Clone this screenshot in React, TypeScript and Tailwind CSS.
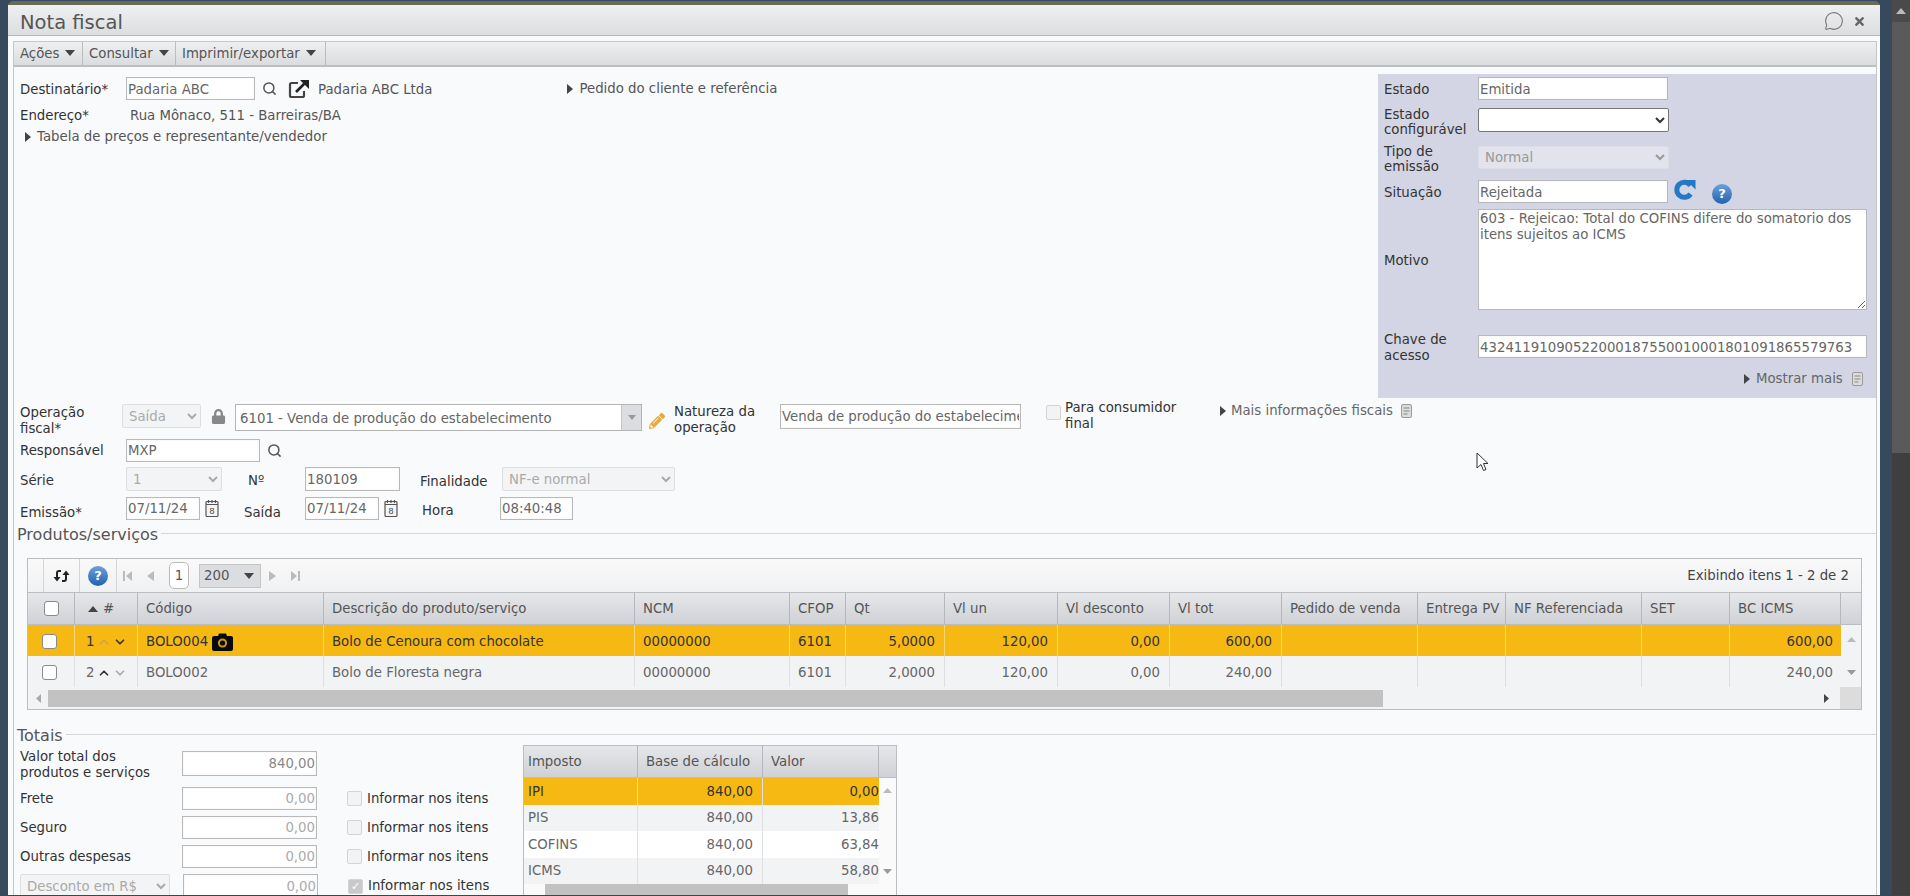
import { ChevronDown, ChevronUp, MessageCircle, Search } from "lucide-react";
import { FaLock, FaPencilAlt, FaTimes } from "react-icons/fa";

const inputBase =
  "h-full w-full border border-[#b9b9b9] bg-white px-[1px] text-[13.3px] text-[#666] shadow-[inset_0_0_1px_#ccc] outline-none";
const gridCols =
  "grid grid-cols-[47px_63px_186px_311px_155px_56px_99px_113px_112px_112px_136px_88px_136px_88px_111px]";
const taxCols = "grid grid-cols-[114px_125px_116px]";

const Caret = ({ className = "" }: { className?: string }) => (
  <svg width="6" height="10" viewBox="0 0 6 10" className={`shrink-0 ${className}`}>
    <polygon points="0,0 6,5 0,10" fill="#444" />
  </svg>
);

const MenuArrow = () => (
  <svg width="10" height="6" viewBox="0 0 10 6" className="ml-[6px] mb-[3px]">
    <polygon points="0,0 10,0 5,6" fill="#444" />
  </svg>
);

const DocIcon = ({ className = "" }: { className?: string }) => (
  <svg width="11" height="14" viewBox="0 0 11 14" className={`shrink-0 ${className}`}>
    <rect x="0.5" y="0.5" width="10" height="13" rx="1.5" fill="#dcdcdc" stroke="#999" />
    <path d="M2.5 4h6M2.5 7h6M2.5 10h4" stroke="#888" strokeWidth="1" />
  </svg>
);

const CalendarIcon = ({ className = "" }: { className?: string }) => (
  <svg width="17" height="19" viewBox="0 0 17 19" className={`shrink-0 ${className}`}>
    <rect x="2" y="2.5" width="12" height="15" rx="1" fill="#f5f5f5" stroke="#555" strokeWidth="1.2" />
    <path d="M2 5.5h12M4.5 1v3M8 1v3M11.5 1v3" stroke="#555" strokeWidth="1.2" />
    <text x="8" y="15" fontSize="9" textAnchor="middle" fill="#444" fontFamily="Liberation Sans">
      8
    </text>
  </svg>
);

const RefreshIcon = ({ className = "" }: { className?: string }) => (
  <svg width="22" height="21" viewBox="0 0 22 21" className={`shrink-0 ${className}`}>
    <path d="M16.5 6.5A7.5 7.5 0 1 0 16.5 15" fill="none" stroke="#2279c5" strokeWidth="5" />
    <polygon points="12,1 21.5,1 21.5,10.5" fill="#2279c5" />
  </svg>
);

const SyncIcon = () => (
  <svg width="17" height="16" viewBox="0 0 17 16">
    <path d="M8 3H6a2 2 0 0 0-2 2v5" fill="none" stroke="#222" strokeWidth="2" />
    <polygon points="0.5,9 7.5,9 4,13.5" fill="#222" />
    <path d="M9 13h2a2 2 0 0 0 2-2V6" fill="none" stroke="#222" strokeWidth="2" />
    <polygon points="9.5,7 16.5,7 13,2.5" fill="#222" />
  </svg>
);

const CameraIcon = () => (
  <svg width="21" height="18" viewBox="0 0 21 18" className="ml-[4px] shrink-0">
    <path d="M2 3h4l1-2.5h7L15 3h4a2 2 0 0 1 2 2v11a2 2 0 0 1-2 2H2a2 2 0 0 1-2-2V5a2 2 0 0 1 2-2z" fill="#0a0a0a" />
    <circle cx="10.5" cy="10" r="4.6" fill="#c99a12" />
    <circle cx="10.5" cy="10" r="2.6" fill="#0a0a0a" />
  </svg>
);

const HelpDot = ({ className = "" }: { className?: string }) => (
  <div
    className={`flex shrink-0 items-center justify-center rounded-full bg-gradient-to-b from-[#6d9fdc] to-[#1f63ae] font-bold text-white ${className}`}
  >
    ?
  </div>
);

const Check = ({ className = "" }: { className?: string }) => (
  <div className={`shrink-0 rounded-[3px] border border-[#8a8a8a] bg-white ${className}`} />
);

const MutedCheck = ({ checked = false }: { checked?: boolean }) => (
  <div className="ml-[30px] flex h-[15px] w-[15px] shrink-0 items-center justify-center rounded-[2px] border border-[#d4d4d4] bg-[#f3f3f3] text-[11px] leading-none text-white">
    {checked && <span className="flex h-full w-full items-center justify-center bg-[#c9c9c9]">✓</span>}
  </div>
);

const Legend = ({ title, className = "" }: { title: string; className?: string }) => (
  <div className={`flex items-center pl-[3px] ${className}`}>
    <span className="text-[16px] leading-[18px] text-[#555]">{title}</span>
    <div className="ml-[3px] mb-[3px] h-px flex-1 bg-[#d6d6d6]" />
  </div>
);

const ToolbarMenu = ({ label, className }: { label: string; className: string }) => (
  <div className={`flex h-full items-center border-r border-[#bdbdbd] pl-[6px] pt-[1px] text-[#555] ${className}`}>
    {label}
    <MenuArrow />
  </div>
);

const headers = [
  "Código",
  "Descrição do produto/serviço",
  "NCM",
  "CFOP",
  "Qt",
  "Vl un",
  "Vl desconto",
  "Vl tot",
  "Pedido de venda",
  "Entrega PV",
  "NF Referenciada",
  "SET",
  "BC ICMS",
];

type ItemRow = {
  n: string;
  code: string;
  desc: string;
  qt: string;
  total: string;
  active: boolean;
};

const items: ItemRow[] = [
  { n: "1", code: "BOLO004", desc: "Bolo de Cenoura com chocolate", qt: "5,0000", total: "600,00", active: true },
  { n: "2", code: "BOLO002", desc: "Bolo de Floresta negra", qt: "2,0000", total: "240,00", active: false },
];

const GridRow = ({ row }: { row: ItemRow }) => {
  const cell = row.active ? "border-r border-[#fbd774] pt-[2px]" : "border-r border-[#dedfe2] pt-[2px]";
  return (
    <div
      className={`${gridCols} h-[31px] items-stretch ${row.active ? "bg-[#f6b913] text-[#333]" : "bg-[#f2f3f5] text-[#666]"}`}
    >
      <div className={`flex items-center pl-[14px] ${cell}`}>
        <Check className="h-[15px] w-[15px]" />
      </div>
      <div className={`flex items-center pl-[11px] ${cell}`}>
        <span>{row.n}</span>
        <ChevronUp size={14} strokeWidth={3} className={`ml-[3px] ${row.active ? "text-[#c9a550]" : "text-[#333]"}`} />
        <ChevronDown size={14} strokeWidth={3} className={`ml-[2px] ${row.active ? "text-[#333]" : "text-[#aaa]"}`} />
      </div>
      <div className={`flex items-center pl-[8px] ${cell}`}>
        {row.code}
        {row.active && <CameraIcon />}
      </div>
      <div className={`flex items-center pl-[8px] ${cell}`}>{row.desc}</div>
      <div className={`flex items-center pl-[8px] ${cell}`}>00000000</div>
      <div className={`flex items-center pl-[8px] ${cell}`}>6101</div>
      <div className={`flex items-center justify-end pr-[9px] ${cell}`}>{row.qt}</div>
      <div className={`flex items-center justify-end pr-[9px] ${cell}`}>120,00</div>
      <div className={`flex items-center justify-end pr-[9px] ${cell}`}>0,00</div>
      <div className={`flex items-center justify-end pr-[9px] ${cell}`}>{row.total}</div>
      <div className={cell} />
      <div className={cell} />
      <div className={cell} />
      <div className={cell} />
      <div className="flex items-center justify-end pr-[8px] pt-[2px]">{row.total}</div>
    </div>
  );
};

const taxes = [
  { name: "IPI", value: "0,00", rowClass: "bg-[#f6b913] text-[#333]" },
  { name: "PIS", value: "13,86", rowClass: "bg-[#f2f3f5] text-[#666]" },
  { name: "COFINS", value: "63,84", rowClass: "bg-white text-[#666]" },
  { name: "ICMS", value: "58,80", rowClass: "bg-[#f2f3f5] text-[#666]" },
];

const TotalRow = ({ label, value, checked }: { label: string; value: string; checked?: boolean }) => (
  <div className="mt-[6px] flex h-[23px] items-center">
    <div className="w-[162px] text-[#333]">{label}</div>
    <div className="h-full w-[135px]">
      <input readOnly value={value} className={`${inputBase} text-right text-[#aaa]`} />
    </div>
    <MutedCheck checked={checked} />
    <span className="ml-[5px] text-[#333]">Informar nos itens</span>
  </div>
);

export default function App() {
  return (
    <div className="relative flex h-[896px] w-[1910px] overflow-hidden border-b border-[#444] bg-[#37495c] font-['DejaVu_Sans',sans-serif] text-[13.3px]">
      {/* modal */}
      <div className="ml-[8px] mt-[5px] flex w-[1872px] flex-col rounded-t-[5px] bg-[#f9fafc] shadow-[0_-4px_0_#6b6a58]">
        <div className="flex h-[31px] shrink-0 items-center border-b border-[#b4b6b8] bg-gradient-to-b from-[#eef0f1] to-[#dcdedf] pl-[12px] pr-[14px]">
          <span className="pt-[6px] text-[19.5px] text-[#555]">Nota fiscal</span>
          <MessageCircle size={20} strokeWidth={1.3} className="ml-auto mt-[2px] text-[#777]" />
          <FaTimes size={13} className="ml-[9px] mt-[2px] text-[#666]" />
        </div>

        <div className="ml-[5px] mt-[5px] flex w-[1864px] flex-1 flex-col border-x border-t border-[#c6c7c9]">
          <div className="flex h-[25px] shrink-0 items-center border-b-2 border-[#bdbec0] bg-gradient-to-b from-[#eeeff0] to-[#dbdcdf]">
            <ToolbarMenu label="Ações" className="w-[69px]" />
            <ToolbarMenu label="Consultar" className="w-[93px]" />
            <ToolbarMenu label="Imprimir/exportar" className="w-[150px]" />
          </div>

          {/* upper area */}
          <div className="flex h-[331px] shrink-0">
            <div className="w-[1364px] pl-[6px] pt-[10px]">
              <div className="flex h-[23px] items-center">
                <div className="w-[106px] pt-[2px] text-[#333]">Destinatário*</div>
                <div className="h-full w-[129px]">
                  <input readOnly value="Padaria ABC" className={`${inputBase} pt-[2px]`} />
                </div>
                <Search size={15} strokeWidth={2.4} className="ml-[7px] text-[#555]" />
                <svg width="22" height="20" viewBox="0 0 22 20" className="ml-[11px]">
                  <path d="M10 4H3.5A1.5 1.5 0 0 0 2 5.5v11A1.5 1.5 0 0 0 3.5 18h11a1.5 1.5 0 0 0 1.5-1.5V12" fill="none" stroke="#444" strokeWidth="2.2" />
                  <path d="M8 13 18 3" stroke="#222" strokeWidth="2.6" />
                  <polygon points="12,1 21,1 21,10" fill="#222" />
                </svg>
                <span className="ml-[8px] pt-[2px] text-[#555]">Padaria ABC Ltda</span>
                <Caret className="ml-[135px]" />
                <span className="ml-[6px] pt-[1px] text-[#555]">Pedido do cliente e referência</span>
              </div>
              <div className="mt-[8px] flex h-[16px] items-center">
                <div className="w-[110px] text-[#333]">Endereço*</div>
                <span className="text-[#555]">Rua Mônaco, 511 - Barreiras/BA</span>
              </div>
              <div className="mt-[5px] flex h-[16px] items-center pl-[5px]">
                <Caret />
                <span className="ml-[6px] text-[#555]">Tabela de preços e representante/vendedor</span>
              </div>
            </div>

            <div className="mt-[7px] w-[498px] bg-[#d3d5e4] pl-[6px] text-[#333]">
              <div className="mt-[3px] flex h-[23px] items-center">
                <div className="w-[94px] pt-[2px]">Estado</div>
                <div className="h-full w-[190px]">
                  <input readOnly value="Emitida" className={`${inputBase} pt-[2px]`} />
                </div>
              </div>
              <div className="mt-[8px] flex h-[24px] items-center">
                <div className="w-[94px] pt-[4px] leading-[15px]">
                  Estado
                  <br />
                  configurável
                </div>
                <select className="h-full w-[191px] rounded-[2px] border border-[#777] bg-white text-[#333]" />
              </div>
              <div className="mt-[14px] flex h-[23px] items-center">
                <div className="w-[94px] pt-[2px] leading-[15px]">
                  Tipo de
                  <br />
                  emissão
                </div>
                <select disabled className="h-full w-[191px] rounded-[2px] border border-[#dcdde6] bg-[#e2e3ec] pl-[2px] text-[#999]">
                  <option>Normal</option>
                </select>
              </div>
              <div className="mt-[11px] flex h-[23px] items-center">
                <div className="w-[94px] pt-[2px]">Situação</div>
                <div className="h-full w-[190px]">
                  <input readOnly value="Rejeitada" className={`${inputBase} pt-[2px]`} />
                </div>
                <RefreshIcon className="ml-[6px] mb-[5px]" />
                <HelpDot className="ml-[16px] mt-[4px] h-[20px] w-[20px] text-[13px]" />
              </div>
              <div className="mt-[6px] flex h-[101px] items-center">
                <div className="w-[94px] pt-[2px]">Motivo</div>
                <textarea
                  readOnly
                  value="603 - Rejeicao: Total do COFINS difere do somatorio dos itens sujeitos ao ICMS"
                  className="h-full w-[389px] resize-y border border-[#b9b9b9] bg-white px-[1px] pt-[1px] text-[13.3px] leading-[16px] text-[#666] outline-none"
                />
              </div>
              <div className="mt-[25px] flex h-[23px] items-center">
                <div className="w-[94px] pt-[2px] leading-[16px]">
                  Chave de
                  <br />
                  acesso
                </div>
                <div className="h-full w-[389px]">
                  <input readOnly value="43241191090522000187550010001801091865579763" className={`${inputBase} pt-[2px] text-[#222]`} />
                </div>
              </div>
              <div className="mt-[13px] flex h-[16px] items-center pl-[360px] text-[#666]">
                <Caret />
                <span className="ml-[6px]">Mostrar mais</span>
                <DocIcon className="ml-[9px]" />
              </div>
            </div>
          </div>

          {/* fiscal fields */}
          <div className="pl-[6px] pt-[6px] text-[#333]">
            <div className="flex h-[27px] items-start">
              <div className="w-[102px] pt-[1px] leading-[16px]">
                Operação
                <br />
                fiscal*
              </div>
              <select disabled className="h-[24px] w-[79px] rounded-[2px] border border-[#dedede] bg-[#f3f4f5] pl-[2px] text-[#aaa]">
                <option>Saída</option>
              </select>
              <FaLock size={15} className="ml-[10px] mt-[5px] text-[#888]" />
              <div className="ml-[9px] flex h-[27px] w-[407px] border border-[#b5b5b5] bg-white">
                <span className="flex flex-1 items-center pl-[4px] pt-[2px] text-[#666]">6101 - Venda de produção do estabelecimento</span>
                <span className="flex w-[20px] items-center justify-center border-l border-[#c5c5c5] bg-[#dcdde0]">
                  <svg width="8" height="5" viewBox="0 0 8 5">
                    <polygon points="0,0 8,0 4,5" fill="#999" />
                  </svg>
                </span>
              </div>
              <FaPencilAlt size={16} className="ml-[7px] mt-[9px] text-[#e8a93a]" />
              <div className="ml-[9px] w-[106px] leading-[16px]">
                Natureza da
                <br />
                operação
              </div>
              <div className="h-[25px] w-[241px]">
                <input readOnly value="Venda de produção do estabelecimento" className={inputBase} />
              </div>
              <div className="ml-[25px] mt-[1px] h-[15px] w-[15px] shrink-0 rounded-[2px] border border-[#d4d4d4] bg-[#f3f3f3]" />
              <div className="-mt-[4px] ml-[4px] w-[155px] leading-[16px]">
                Para consumidor
                <br />
                final
              </div>
              <div className="-mt-[1px] flex h-[16px] items-center text-[#666]">
                <Caret />
                <span className="ml-[5px]">Mais informações fiscais</span>
                <DocIcon className="ml-[8px]" />
              </div>
            </div>

            <div className="mt-[8px] flex h-[23px] items-center">
              <div className="w-[106px]">Responsável</div>
              <div className="h-full w-[134px]">
                <input readOnly value="MXP" className={inputBase} />
              </div>
              <Search size={15} strokeWidth={2.4} className="ml-[7px] text-[#555]" />
            </div>

            <div className="mt-[5px] flex h-[24px] items-center">
              <div className="w-[106px] pt-[4px]">Série</div>
              <select disabled className="h-full w-[96px] rounded-[2px] border border-[#dedede] bg-[#f3f4f5] pl-[2px] text-[#aaa]">
                <option>1</option>
              </select>
              <div className="ml-[26px] w-[57px] pt-[4px]">Nº</div>
              <div className="h-full w-[95px]">
                <input readOnly value="180109" className={inputBase} />
              </div>
              <div className="ml-[20px] w-[82px] pt-[5px]">Finalidade</div>
              <select disabled className="h-full w-[173px] rounded-[2px] border border-[#dedede] bg-[#f3f4f5] pl-[2px] text-[#aaa]">
                <option>NF-e normal</option>
              </select>
            </div>

            <div className="mt-[6px] flex h-[23px] items-center">
              <div className="w-[106px] pt-[9px]">Emissão*</div>
              <div className="h-full w-[74px]">
                <input readOnly value="07/11/24" className={inputBase} />
              </div>
              <CalendarIcon className="ml-[4px]" />
              <div className="ml-[23px] w-[61px] pt-[9px]">Saída</div>
              <div className="h-full w-[74px]">
                <input readOnly value="07/11/24" className={inputBase} />
              </div>
              <CalendarIcon className="ml-[4px]" />
              <div className="ml-[22px] w-[78px] pt-[4px]">Hora</div>
              <div className="h-full w-[73px]">
                <input readOnly value="08:40:48" className={inputBase} />
              </div>
            </div>
          </div>

          <Legend title="Produtos/serviços" className="mt-[6px]" />

          {/* items grid */}
          <div className="ml-[13px] mt-[14px] w-[1835px] shrink-0 border border-[#bcbdc0] bg-[#f2f3f5]">
            <div className="flex h-[33px] items-center bg-gradient-to-b from-[#f9f9f9] to-[#f0f1f3] text-[#555]">
              <div className="ml-[15px] flex h-full w-[37px] items-center justify-center border-x border-[#d5d5d5]">
                <SyncIcon />
              </div>
              <div className="flex h-full w-[37px] items-center justify-center border-r border-[#d5d5d5]">
                <HelpDot className="h-[20px] w-[20px] text-[13px]" />
              </div>
              <svg width="9" height="10" viewBox="0 0 9 10" className="ml-[6px]">
                <path d="M1 0v10" stroke="#bbb" strokeWidth="2" />
                <polygon points="9,0 3,5 9,10" fill="#bbb" />
              </svg>
              <svg width="7" height="10" viewBox="0 0 7 10" className="ml-[15px]">
                <polygon points="7,0 0,5 7,10" fill="#bbb" />
              </svg>
              <div className="ml-[15px] flex h-[27px] w-[20px] items-center justify-center rounded-[5px] border border-[#bbb] bg-white">1</div>
              <div className="ml-[10px] flex h-[24px] w-[62px] items-center justify-between border border-[#c5c5c5] bg-[#dcdde0] px-[4px] pr-[6px]">
                200
                <svg width="10" height="6" viewBox="0 0 10 6">
                  <polygon points="0,0 10,0 5,6" fill="#444" />
                </svg>
              </div>
              <svg width="7" height="10" viewBox="0 0 7 10" className="ml-[8px]">
                <polygon points="0,0 7,5 0,10" fill="#bbb" />
              </svg>
              <svg width="9" height="10" viewBox="0 0 9 10" className="ml-[15px]">
                <polygon points="0,0 6,5 0,10" fill="#bbb" />
                <path d="M8 0v10" stroke="#bbb" strokeWidth="2" />
              </svg>
              <span className="ml-auto mr-[12px] text-[#444]">Exibindo itens 1 - 2 de 2</span>
            </div>

            <div className="flex h-[33px] border-y border-[#bcbdc0] bg-gradient-to-b from-[#e6e7ea] to-[#cfd1d6] text-[#555]">
              <div className={`${gridCols} flex-1`}>
                <div className="flex items-center border-r border-[#b5b7bc] pl-[16px]">
                  <Check className="h-[15px] w-[15px]" />
                </div>
                <div className="flex items-center border-r border-[#b5b7bc] pl-[13px]">
                  <svg width="10" height="6" viewBox="0 0 10 6">
                    <polygon points="0,6 10,6 5,0" fill="#444" />
                  </svg>
                  <span className="ml-[5px]">#</span>
                </div>
                {headers.map((h) => (
                  <div key={h} className="flex items-center overflow-hidden whitespace-nowrap border-r border-[#b5b7bc] pl-[8px]">
                    {h}
                  </div>
                ))}
              </div>
            </div>

            <div className="flex">
              <div className="flex-1">
                {items.map((row) => (
                  <GridRow key={row.n} row={row} />
                ))}
              </div>
              <div className="flex w-[21px] shrink-0 flex-col items-center justify-between py-[12px]">
                <svg width="9" height="5" viewBox="0 0 9 5">
                  <polygon points="0,5 9,5 4.5,0" fill="#bbb" />
                </svg>
                <svg width="9" height="5" viewBox="0 0 9 5">
                  <polygon points="0,0 9,0 4.5,5" fill="#999" />
                </svg>
              </div>
            </div>

            <div className="flex h-[22px] items-center">
              <svg width="5" height="9" viewBox="0 0 5 9" className="ml-[8px]">
                <polygon points="5,0 0,4.5 5,9" fill="#aaa" />
              </svg>
              <div className="ml-[7px] h-[17px] w-[1338px] bg-[#c2c2c2]" />
              <svg width="5" height="9" viewBox="0 0 5 9" className="ml-[441px]">
                <polygon points="0,0 5,4.5 0,9" fill="#444" />
              </svg>
              <div className="ml-[11px] h-full w-[21px] bg-[#dcdcdc]" />
            </div>
          </div>

          <Legend title="Totais" className="mt-[17px]" />

          {/* totals */}
          <div className="flex flex-1 overflow-hidden pl-[6px]">
            <div className="w-[503px]">
              <div className="mb-[11px] mt-[6px] flex h-[25px] items-center">
                <div className="w-[162px] pt-[3px] leading-[16px] text-[#333]">
                  Valor total dos
                  <br />
                  produtos e serviços
                </div>
                <div className="h-full w-[135px]">
                  <input readOnly value="840,00" className={`${inputBase} text-right text-[#888]`} />
                </div>
              </div>
              <TotalRow label="Frete" value="0,00" />
              <TotalRow label="Seguro" value="0,00" />
              <TotalRow label="Outras despesas" value="0,00" />
              <div className="mt-[6px] flex h-[24px] items-center">
                <select disabled className="h-full w-[150px] rounded-[2px] border border-[#dedede] bg-[#f3f4f5] pl-[2px] text-[#aaa]">
                  <option>Desconto em R$</option>
                </select>
                <div className="ml-[13px] h-full w-[135px]">
                  <input readOnly value="0,00" className={`${inputBase} text-right text-[#aaa]`} />
                </div>
                <MutedCheck checked />
                <span className="ml-[5px] text-[#333]">Informar nos itens</span>
              </div>
            </div>

            <div className="h-[160px] w-[374px] shrink-0 border border-[#bcbdc0] bg-[#fafafa]">
              <div className="flex h-[32px] border-b border-[#bcbdc0] bg-gradient-to-b from-[#e6e7ea] to-[#cfd1d6] text-[#555]">
                <div className={`${taxCols} flex-1`}>
                  <div className="flex items-center border-r border-[#b5b7bc] pl-[4px]">Imposto</div>
                  <div className="flex items-center border-r border-[#b5b7bc] pl-[8px]">Base de cálculo</div>
                  <div className="flex items-center border-r border-[#b5b7bc] pl-[8px]">Valor</div>
                </div>
                <div className="w-[17px]" />
              </div>
              <div className="flex">
                <div>
                  {taxes.map((t) => (
                    <div key={t.name} className={`${taxCols} h-[26.5px] ${t.rowClass}`}>
                      <div className="flex items-center border-r border-[#dedfe2] pl-[4px] pt-[1px]">{t.name}</div>
                      <div className="flex items-center justify-end border-r border-[#dedfe2] pr-[9px] pt-[1px]">840,00</div>
                      <div className="flex items-center justify-end pt-[1px]">{t.value}</div>
                    </div>
                  ))}
                </div>
                <div className="flex flex-1 flex-col items-center justify-between py-[10px]">
                  <svg width="9" height="5" viewBox="0 0 9 5">
                    <polygon points="0,5 9,5 4.5,0" fill="#bbb" />
                  </svg>
                  <svg width="9" height="5" viewBox="0 0 9 5">
                    <polygon points="0,0 9,0 4.5,5" fill="#999" />
                  </svg>
                </div>
              </div>
              <div className="flex h-[14px] items-center">
                <div className="ml-[21px] h-full w-[303px] bg-[#c2c2c2]" />
              </div>
            </div>
          </div>
        </div>
      </div>

      {/* page scrollbar */}
      <div className="ml-[12px] flex w-[18px] flex-col bg-[#3f3f3f]">
        <div className="flex h-[22px] items-center justify-center bg-[#4a4a4a]">
          <svg width="10" height="6" viewBox="0 0 10 6">
            <polygon points="0,6 10,6 5,0" fill="#bbb" />
          </svg>
        </div>
        <div className="h-[431px] bg-[#5a5a5a]" />
      </div>

      {/* mouse cursor */}
      <svg width="14" height="20" viewBox="0 0 14 20" className="absolute left-[1476px] top-[452px]">
        <path d="M1 1v15l4-3.5 2.5 6 2.5-1-2.5-6H12z" fill="#fff" stroke="#333" strokeWidth="1" />
      </svg>
    </div>
  );
}
